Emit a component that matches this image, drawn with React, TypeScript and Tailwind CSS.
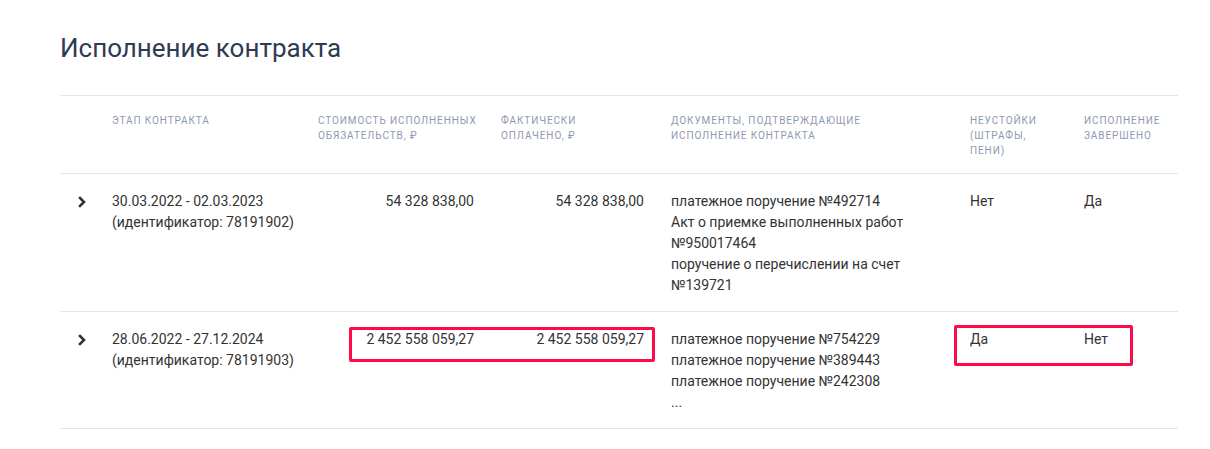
import React from 'react';

type Row = {
  period: string;
  id: string;
  cost: string;
  paid: string;
  docs: string[];
  penalty: string;
  done: string;
  marked?: boolean;
};

const rows: Row[] = [
  {
    period: '30.03.2022 - 02.03.2023',
    id: '78191902',
    cost: '54 328 838,00',
    paid: '54 328 838,00',
    docs: [
      'платежное поручение №492714',
      'Акт о приемке выполненных работ №950017464',
      'поручение о перечислении на счет №139721',
    ],
    penalty: 'Нет',
    done: 'Да',
  },
  {
    period: '28.06.2022 - 27.12.2024',
    id: '78191903',
    cost: '2 452 558 059,27',
    paid: '2 452 558 059,27',
    docs: [
      'платежное поручение №754229',
      'платежное поручение №389443',
      'платежное поручение №242308',
      '...',
    ],
    penalty: 'Да',
    done: 'Нет',
    marked: true,
  },
];

const cols = 'grid grid-cols-[40px_206px_182px_170px_300px_114px_106px]';

function Chevron() {
  return (
    <svg width="10" height="12" viewBox="0 0 10 12" className="mt-[5px] ml-[17px]">
      <path d="M3 2l4 4-4 4" fill="none" stroke="#333" strokeWidth="2.6" strokeLinecap="square" />
    </svg>
  );
}

export default function App() {
  return (
    <div className="min-h-screen bg-white pl-[60px] pr-[32px] pt-[30px] font-['Roboto',sans-serif]">
      <h1 className="text-[26px] leading-[36px] text-[#2f3b52] font-normal">Исполнение контракта</h1>

      <div className="mt-[29px] border-t border-[#e4e6ee]">
        {/* Header */}
        <div className={`${cols} border-b border-[#e4e6ee] pt-[17px] pb-[15px] text-[10px] leading-[15px] uppercase tracking-[0.9px] text-[#8e98b2]`}>
          <div />
          <div className="pl-3">Этап контракта</div>
          <div className="pl-3 pr-2">Стоимость исполненных обязательств, ₽</div>
          <div className="pl-[13px] pr-[30px]">Фактически оплачено, ₽</div>
          <div className="pl-[13px] pr-8">Документы, подтверждающие исполнение контракта</div>
          <div className="pl-3 pr-10">Неустойки (штрафы, пени)</div>
          <div className="pl-3">Исполнение завершено</div>
        </div>

        {rows.map((r) => (
          <div
            key={r.id}
            className={`${cols} relative border-b border-[#e4e6ee] pt-[17px] pb-[15px] text-[14px] leading-[21px] text-[#333]`}
          >
            <div>
              <Chevron />
            </div>
            <div className="pl-3">
              <div>{r.period}</div>
              <div>(идентификатор: {r.id})</div>
            </div>
            <div className="pl-3 pr-[14px] text-right">{r.cost}</div>
            <div className="pl-[13px] pr-[14px] text-right">{r.paid}</div>
            <div className="pl-[13px] pr-10">
              {r.docs.map((d) => (
                <div key={d}>{d}</div>
              ))}
            </div>
            <div className="pl-3">{r.penalty}</div>
            <div className="pl-3">{r.done}</div>

            {r.marked && (
              <>
                <div className="absolute left-[289px] top-[15px] w-[306px] h-[35px] border-[3px] border-[#ff0a47] rounded-[2px] pointer-events-none" />
                <div className="absolute left-[894px] top-[13px] w-[179px] h-[41px] border-[3px] border-[#ff0a47] rounded-[2px] pointer-events-none" />
              </>
            )}
          </div>
        ))}
      </div>
    </div>
  );
}
